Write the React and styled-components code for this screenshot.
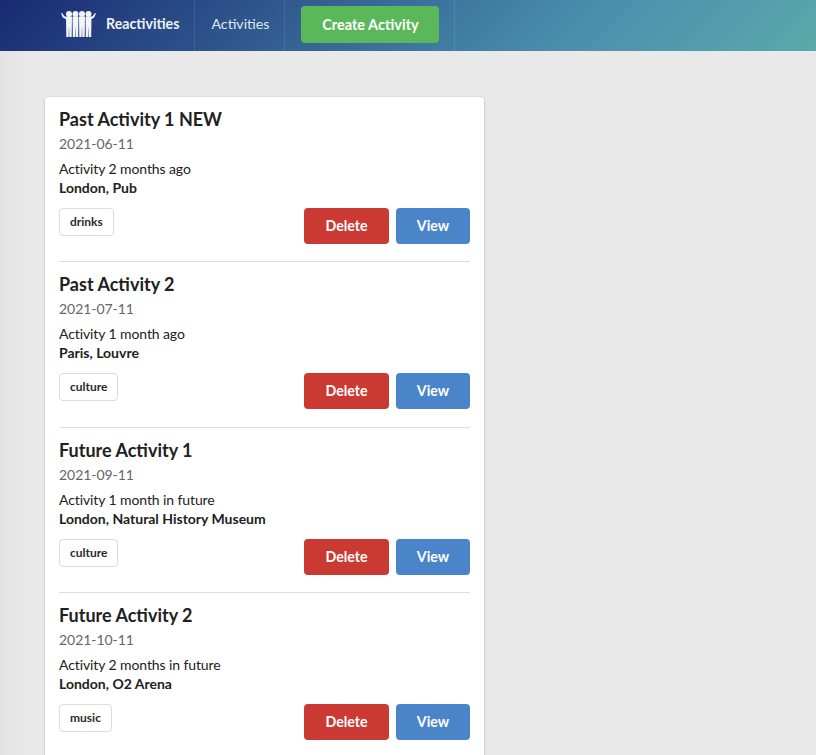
import React from 'react'
import styled, { createGlobalStyle } from 'styled-components'

const GlobalStyle = createGlobalStyle`
  html, body {
    margin: 0;
    height: 100%;
    overflow: hidden;
    background: #e9e9e9;
    font-family: Lato, "Helvetica Neue", Arial, sans-serif;
    font-size: 14px;
    color: #212121;
  }
`

const Page = styled.div`
  height: 755px;
  overflow: hidden;
  background: linear-gradient(90deg, #e3e3e3 0, #e9e9e9 26px);
`

const Nav = styled.nav`
  height: 51px;
  display: flex;
  padding-left: 44px;
  background: linear-gradient(135deg, #192a72 0%, #4a8fae 70%, #5ba9aa 100%);
`

const NavItem = styled.a`
  display: flex;
  align-items: center;
  padding: 0 ${(p) => p.$right}px 5px ${(p) => p.$left}px;
  color: ${(p) => (p.$bold ? '#eef2f7' : '#dfe7f0')};
  font-size: 14.2px;
  font-weight: ${(p) => (p.$bold ? 700 : 400)};
  border-right: 1px solid rgba(255, 255, 255, 0.1);
`

const Logo = styled.svg`
  width: 35px;
  height: 26px;
  margin: 2px 10px 0 0;
`

const CreateButton = styled.button`
  width: 138px;
  height: 37px;
  margin-top: 3px;
  border: 0;
  border-radius: 4px;
  background: #5bb85a;
  color: #fff;
  font-family: inherit;
  font-size: 14.5px;
  font-weight: 700;
`

const Main = styled.main`
  width: 439px;
  margin: 46px 0 0 45px;
`

const Card = styled.section`
  background: #fff;
  border-radius: 4px;
  box-shadow: 0 1px 3px rgba(34, 36, 38, 0.18), 0 0 0 1px rgba(34, 36, 38, 0.03);
  padding: 0 14px;
`

const Item = styled.article`
  height: 165.33px;
  box-sizing: border-box;
  padding-top: 11px;
  border-bottom: 1px solid #dedede;
  display: flex;
  flex-direction: column;

  &:last-child {
    border-bottom: 0;
  }
`

const Title = styled.h2`
  margin: 0;
  font-size: 18px;
  line-height: 22px;
  font-weight: 700;
  color: #212121;
`

const Date = styled.div`
  margin-top: 4px;
  font-size: 14px;
  line-height: 20px;
  letter-spacing: -0.05px;
  color: #666;
`

const Description = styled.div`
  margin-top: 5px;
  font-size: 14px;
  line-height: 19px;
  letter-spacing: -0.1px;
`

const Venue = styled.div`
  font-size: 14px;
  line-height: 19px;
  font-weight: 700;
`

const Footer = styled.div`
  display: flex;
  align-items: flex-start;
  margin-top: 11px;
`

const Tag = styled.span`
  box-sizing: border-box;
  height: 28px;
  display: flex;
  align-items: center;
  padding: 0 10px 1px;
  margin-right: auto;
  border: 1px solid #dcdcdc;
  border-radius: 4px;
  font-size: 12px;
  font-weight: 700;
  color: #2b2b2b;
`

const Action = styled.button`
  width: ${(p) => p.$width}px;
  height: 36px;
  margin-left: ${(p) => p.$gap || 0}px;
  padding: 0 0 1px;
  border: 0;
  border-radius: 4px;
  background: ${(p) => p.$color};
  color: #fff;
  font-family: inherit;
  font-size: 14.2px;
  font-weight: 700;
`

const activities = [
  { title: 'Past Activity 1 NEW', date: '2021-06-11', text: 'Activity 2 months ago', venue: 'London, Pub', tag: 'drinks' },
  { title: 'Past Activity 2', date: '2021-07-11', text: 'Activity 1 month ago', venue: 'Paris, Louvre', tag: 'culture' },
  { title: 'Future Activity 1', date: '2021-09-11', text: 'Activity 1 month in future', venue: 'London, Natural History Museum', tag: 'culture' },
  { title: 'Future Activity 2', date: '2021-10-11', text: 'Activity 2 months in future', venue: 'London, O2 Arena', tag: 'music' },
]

function GroupLogo() {
  const people = [8, 14.5, 21, 27.5]
  return (
    <Logo viewBox="0 0 35 26" fill="#f2f4f8">
      {people.map((x) => (
        <g key={x}>
          <circle cx={x} cy="3" r="3" />
          <path d={`M${x - 3} 5.5h6l-.3 20.5h-2.4l-.2-9h-.2l-.2 9h-2.4z`} />
        </g>
      ))}
      <path d="M5.4 8.5 1.8 6.6 0 2.4l1.1-.5 2.1 3 2.2 1zM29.6 8.5l3.6-1.9L35 2.4l-1.1-.5-2.1 3-2.3 1z" />
    </Logo>
  )
}

export default function App() {
  return (
    <Page>
      <GlobalStyle />
      <Nav>
        <NavItem $bold $left={17} $right={15}>
          <GroupLogo />
          Reactivities
        </NavItem>
        <NavItem $left={16} $right={15}>Activities</NavItem>
        <NavItem $left={16} $right={15}>
          <CreateButton>Create Activity</CreateButton>
        </NavItem>
      </Nav>
      <Main>
        <Card>
          {activities.map((a) => (
            <Item key={a.title}>
              <Title>{a.title}</Title>
              <Date>{a.date}</Date>
              <Description>{a.text}</Description>
              <Venue>{a.venue}</Venue>
              <Footer>
                <Tag>{a.tag}</Tag>
                <Action $width={85} $color="#cb3a32">Delete</Action>
                <Action $width={74} $gap={7} $color="#4a84c9">View</Action>
              </Footer>
            </Item>
          ))}
        </Card>
      </Main>
    </Page>
  )
}
